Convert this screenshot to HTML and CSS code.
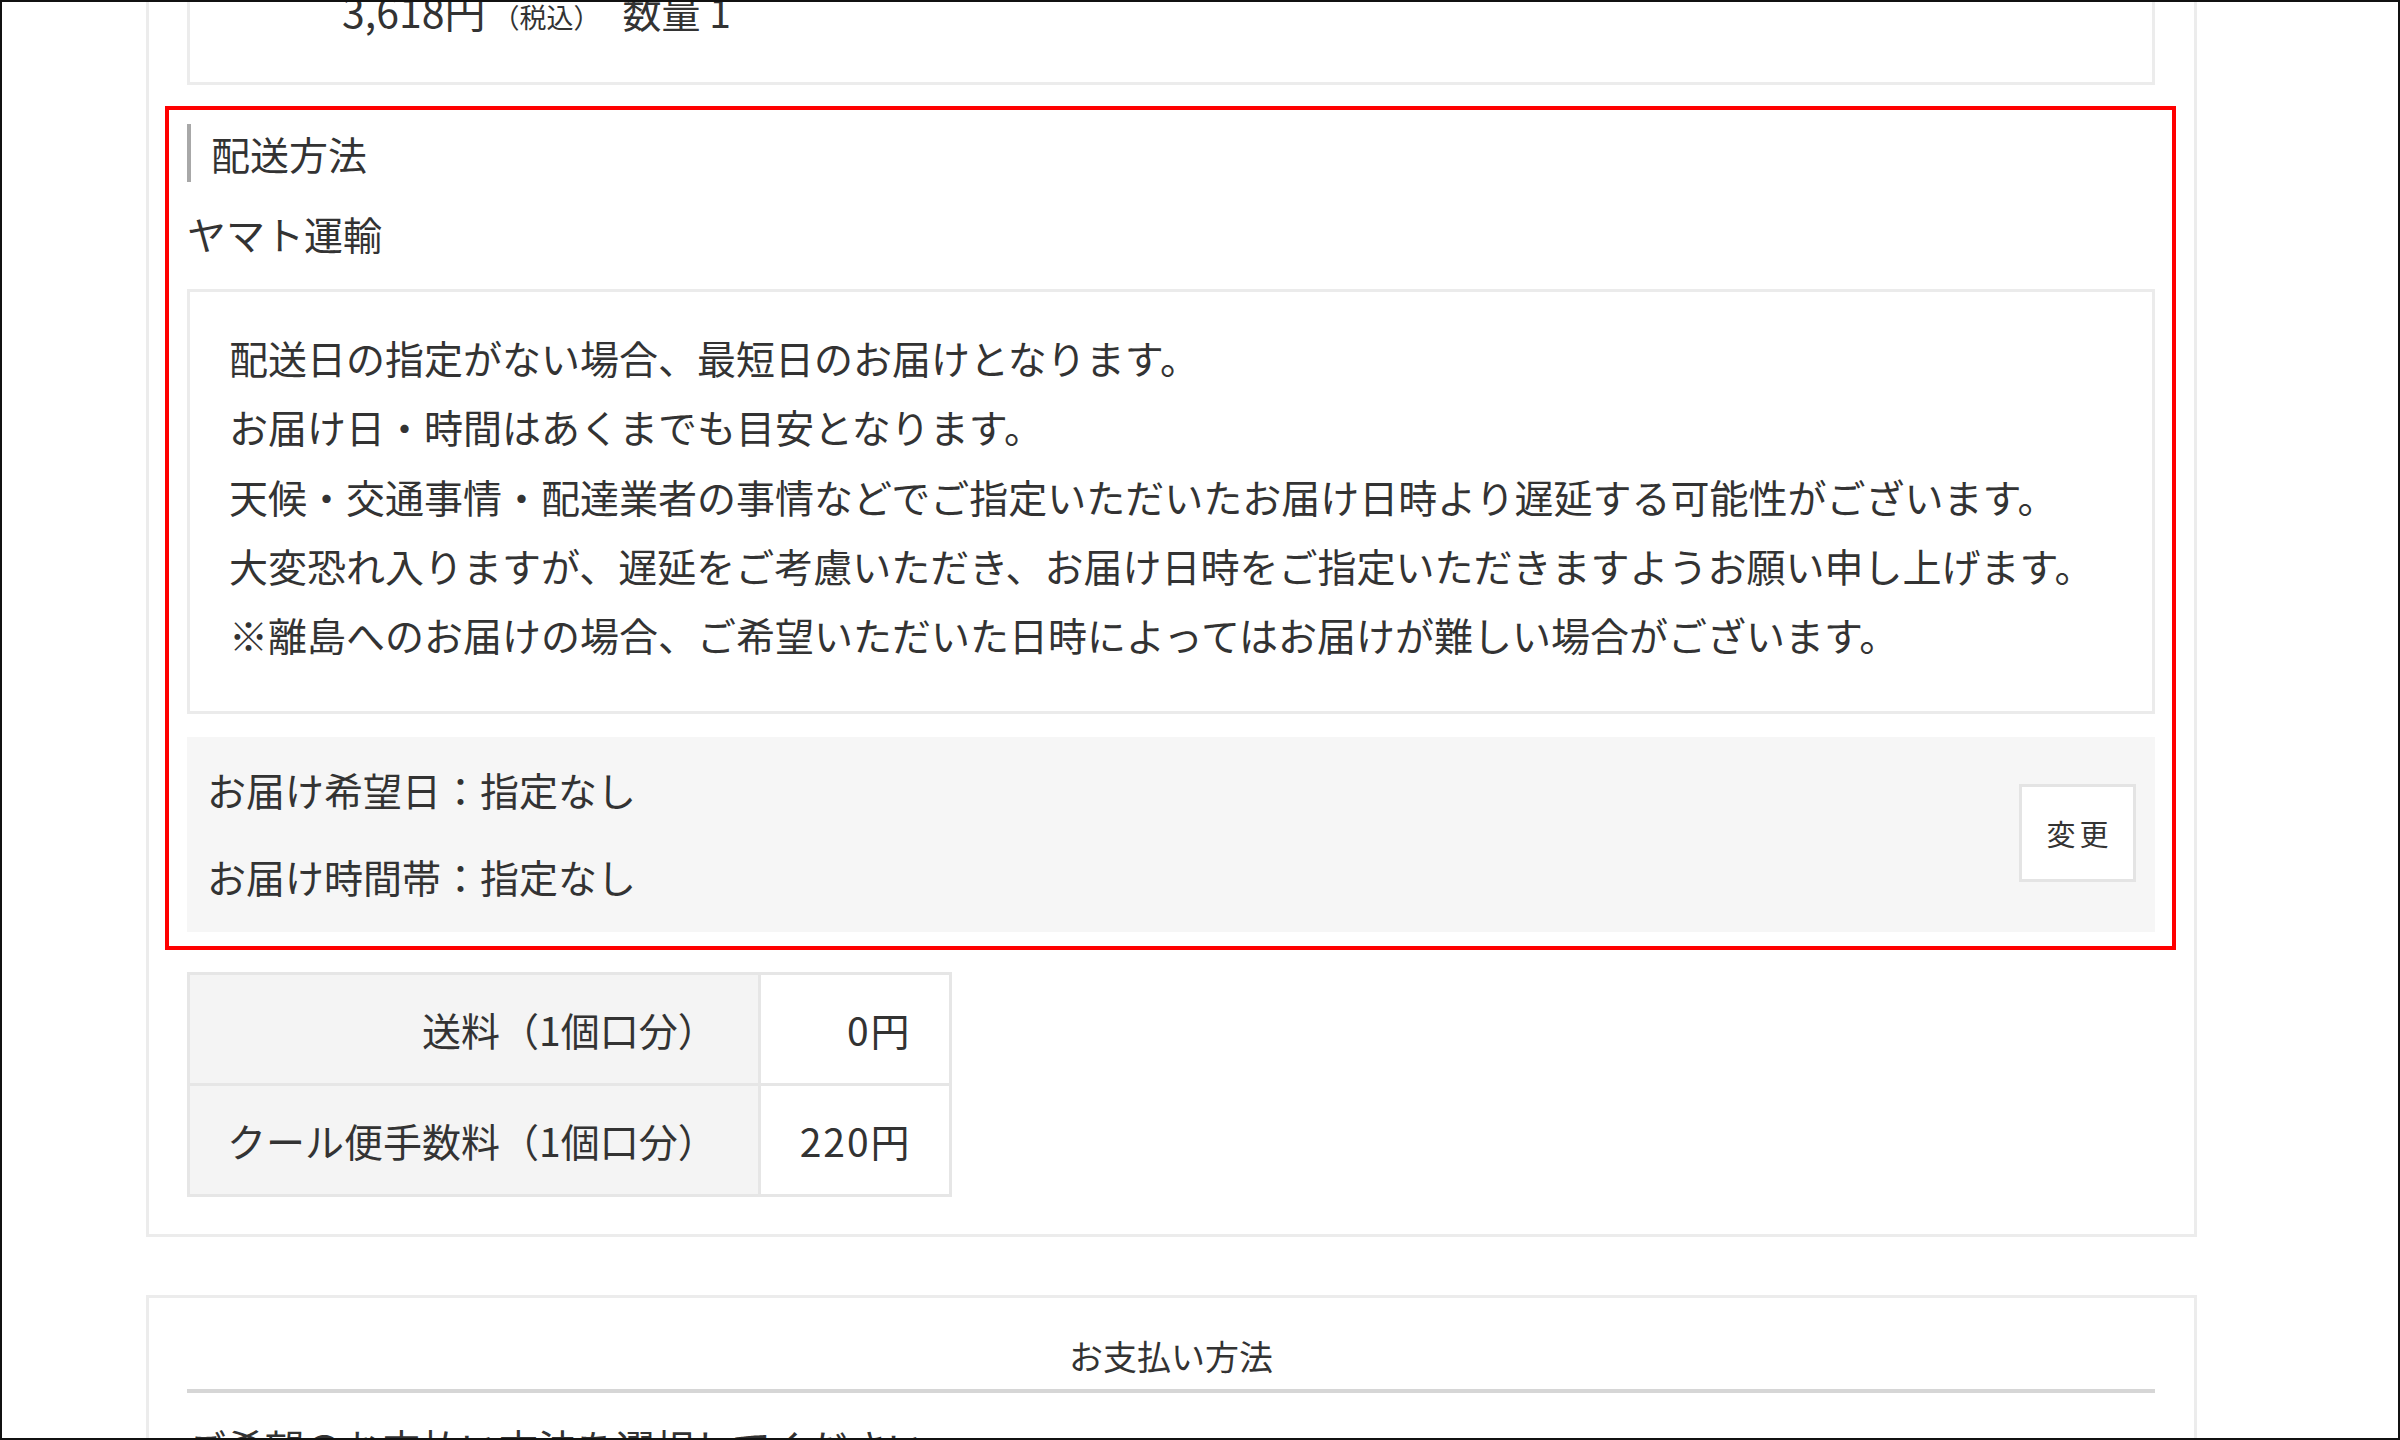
FILE: index.html
```html
<!DOCTYPE html>
<html lang="ja">
<head>
<meta charset="utf-8">
<title>配送方法</title>
<link rel="stylesheet" href="styles.css">
</head>
<body>
<div class="frame">
  <div class="page">
    <section class="card card-open">
      <div class="product">
        <div class="price-row">
          <span class="price">3,618円</span>
          <span class="tax">（税込）</span>
          <span class="qty">数量 1</span>
        </div>
      </div>

      <div class="delivery">
        <h2 class="heading">配送方法</h2>
        <p class="carrier">ヤマト運輸</p>
        <div class="notice">
          <p>配送日の指定がない場合、最短日のお届けとなります。</p>
          <p>お届け日・時間はあくまでも目安となります。</p>
          <p>天候・交通事情・配達業者の事情などでご指定いただいたお届け日時より遅延する可能性がございます。</p>
          <p>大変恐れ入りますが、遅延をご考慮いただき、お届け日時をご指定いただきますようお願い申し上げます。</p>
          <p>※離島へのお届けの場合、ご希望いただいた日時によってはお届けが難しい場合がございます。</p>
        </div>
        <div class="schedule">
          <div class="schedule-rows">
            <p>お届け希望日：指定なし</p>
            <p>お届け時間帯：指定なし</p>
          </div>
          <button class="change" type="button">変更</button>
        </div>
      </div>

      <table class="fees">
        <tr class="fee-first">
          <th>送料（1個口分）</th>
          <td>0円</td>
        </tr>
        <tr>
          <th>クール便手数料（1個口分）</th>
          <td>220円</td>
        </tr>
      </table>
    </section>

    <section class="card pay">
      <h2 class="pay-title">お支払い方法</h2>
      <p class="pay-lead">ご希望のお支払い方法を選択してください。</p>
    </section>
  </div>
</div>
</body>
</html>
```

FILE: styles.css
```css
html, body {
  margin: 0;
  padding: 0;
  background: #111;
}

.frame {
  width: 2400px;
  height: 1440px;
  box-sizing: border-box;
  border: 2px solid #111;
  background: #fff;
  overflow: hidden;
  font-family: "Noto Sans CJK JP", "Noto Sans", sans-serif;
  color: #333;
  font-size: 39px;
}

.page {
  padding-left: 144px;
}

.card {
  width: 2051px;
  box-sizing: border-box;
  border: 3px solid #ececec;
  padding: 0 39px 0 38px;
  background: #fff;
}

.card-open {
  border-top: none;
  padding-bottom: 37px;
}

/* product summary (cut off at top) */
.product {
  border: 3px solid #ececec;
  border-top: none;
  padding: 0 0 64px 152px;
}

.price-row {
  display: flex;
  align-items: baseline;
  height: 16px;
}

.price {
  font-size: 41px;
  line-height: 16px;
}

.tax {
  font-size: 27px;
  line-height: 16px;
  margin-left: 7px;
}

.qty {
  font-size: 39px;
  line-height: 16px;
  margin-left: 22px;
}

/* highlighted delivery section */
.delivery {
  margin: 21px -21px 0 -22px;
  border: 4px solid #ff0000;
  padding: 0 17px 14px 18px;
}

.heading {
  margin: 14px 0 0;
  border-left: 4px solid #a8a8a8;
  padding-left: 20px;
  font-size: 39px;
  font-weight: normal;
  line-height: 58px;
}

.carrier {
  margin: 26px 0 0;
  line-height: 50px;
}

.notice {
  margin-top: 31px;
  border: 3px solid #ebebeb;
  padding: 31px 39px 42px 39px;
}

.notice p {
  margin: 0;
  line-height: 69.3px;
}

.schedule {
  margin-top: 23px;
  background: #f6f6f6;
  display: flex;
  align-items: center;
  justify-content: space-between;
  padding: 25px 19px 29px 20px;
}

.schedule-rows p {
  margin: 0;
  line-height: 54px;
}

.schedule-rows p + p {
  margin-top: 33px;
}

.change {
  width: 117px;
  height: 98px;
  box-sizing: border-box;
  border: 3px solid #e4e4e4;
  background: #fff;
  color: #333;
  font-family: "Noto Sans CJK JP", "Noto Sans", sans-serif;
  font-size: 29px;
  letter-spacing: 4px;
  padding: 0 0 0 4px;
  display: flex;
  align-items: center;
  justify-content: center;
}

/* fee table */
.fees {
  margin-top: 22px;
  border-collapse: separate;
  border-spacing: 0;
  border: 3px solid #e6e6e6;
}

.fees th,
.fees td {
  font-size: 39px;
  font-weight: normal;
  line-height: 50px;
  text-align: right;
  white-space: nowrap;
}

.fees th {
  background: #f4f4f4;
  padding: 29px 41px 29px 37px;
  border-right: 3px solid #e6e6e6;
}

.fees td {
  background: #fff;
  letter-spacing: 2px;
  padding: 29px 37px 29px 39px;
}

.fee-first th,
.fee-first td {
  border-bottom: 3px solid #e6e6e6;
}

/* payment card */
.pay {
  margin-top: 58px;
}

.pay-title {
  margin: 0;
  padding: 33px 0 8px;
  font-size: 34px;
  font-weight: normal;
  line-height: 50px;
  text-align: center;
  border-bottom: 4px solid #d6d6d6;
}

.pay-lead {
  margin: 28px 0 0;
  line-height: 50px;
}
```
